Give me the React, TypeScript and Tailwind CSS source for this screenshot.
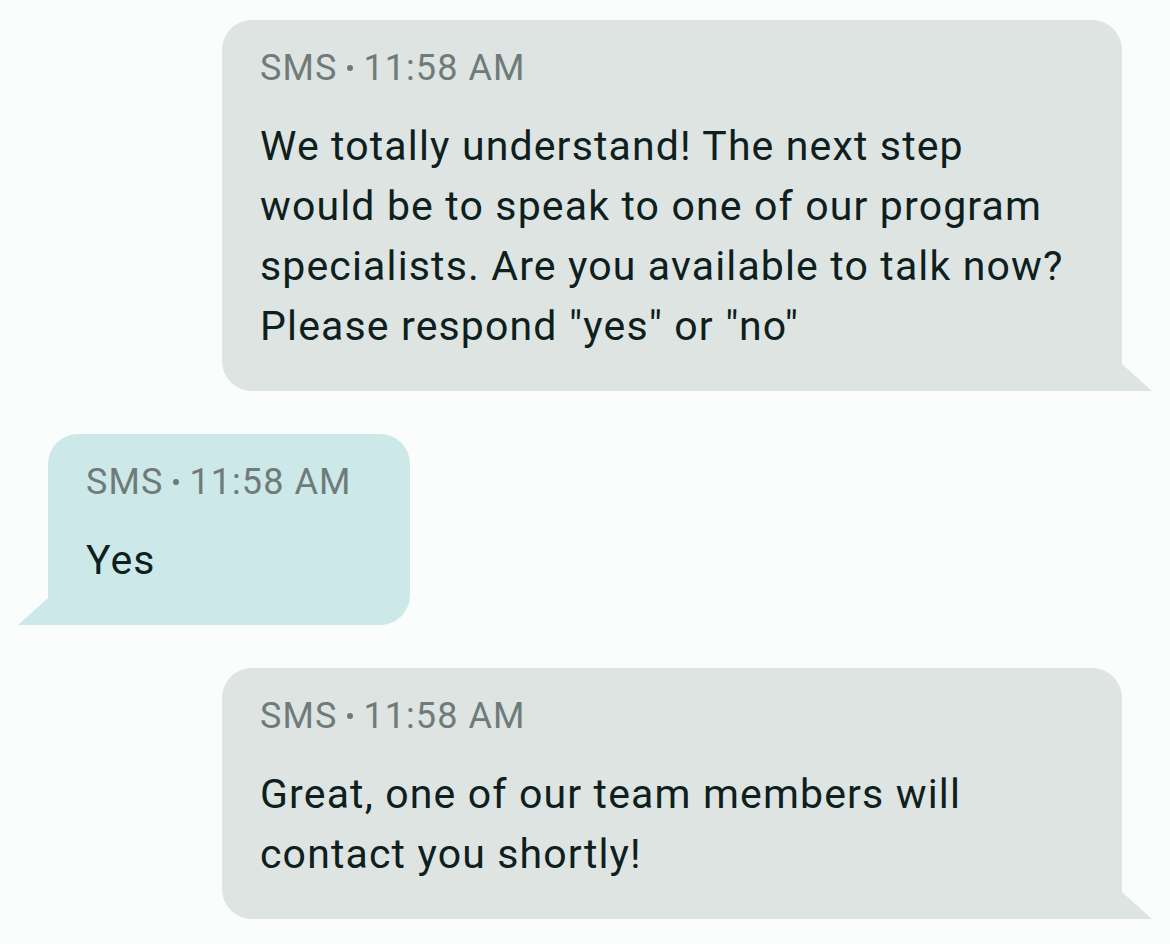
import React from "react";

type Side = "in" | "out";

interface BubbleProps {
  side: Side;
  lines: string[];
  className: string;
}

function Tail({ side, color }: { side: Side; color: string }) {
  // little triangle that hangs off the bottom corner
  if (side === "out") {
    return (
      <svg className="absolute -right-[30px] bottom-0 w-[30px] h-[27px]" viewBox="0 0 30 27">
        <path d="M0 0 L30 27 L0 27 Z" fill={color} />
      </svg>
    );
  }
  return (
    <svg className="absolute -left-[30px] bottom-0 w-[30px] h-[27px]" viewBox="0 0 30 27">
      <path d="M30 0 L0 27 L30 27 Z" fill={color} />
    </svg>
  );
}

function Bubble({ side, lines, className }: BubbleProps) {
  const out = side === "out";
  return (
    <div
      className={`relative px-[38px] pt-[24px] pb-[35px] ${
        out
          ? "bg-[#dde4e2] rounded-t-[30px] rounded-bl-[30px]"
          : "bg-[#cde8e8] rounded-t-[30px] rounded-br-[30px]"
      } ${className}`}
    >
      <div className="text-[36px] leading-[48px] tracking-[0.03em] text-[#6f7b79] flex items-center">
        <span>SMS</span>
        <span className="mx-[10px] w-[6px] h-[6px] rounded-full bg-[#6f7b79]" />
        <span>11:58 AM</span>
      </div>
      <div className="mt-[24px] text-[41px] leading-[60px] tracking-[0.028em] text-[#0e201d]">
        {lines.map((l, i) => (
          <div key={i} className="whitespace-nowrap">
            {l}
          </div>
        ))}
      </div>
      <Tail side={side} color={out ? "#dde4e2" : "#cde8e8"} />
    </div>
  );
}

export default function App() {
  return (
    <div
      className="min-h-[944px] w-[1170px] bg-[#fbfcfc] pt-[20px] flex flex-col gap-[43px]"
      style={{ fontFamily: "Roboto, 'Noto Sans', sans-serif" }}
    >
      <Bubble
        side="out"
        className="ml-[222px] w-[900px]"
        lines={[
          "We totally understand! The next step",
          "would be to speak to one of our program",
          "specialists. Are you available to talk now?",
          'Please respond "yes" or "no"',
        ]}
      />
      <Bubble side="in" className="ml-[48px] w-[362px]" lines={["Yes"]} />
      <Bubble
        side="out"
        className="ml-[222px] w-[900px]"
        lines={["Great, one of our team members will", "contact you shortly!"]}
      />
    </div>
  );
}
